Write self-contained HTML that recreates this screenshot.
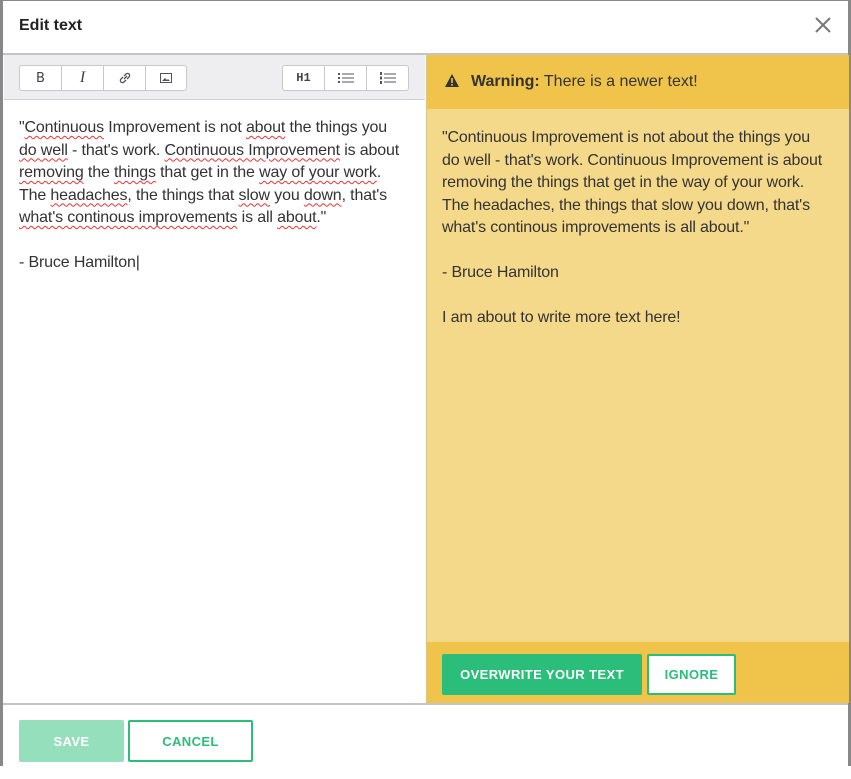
<!DOCTYPE html>
<html><head><style>
body{margin:0;width:851px;height:779px;background:#888;position:relative;overflow:hidden;font-family:"Liberation Sans",sans-serif;}
.bgtxt{position:absolute;left:0;top:766px;width:851px;height:13px;background:#fff;}
.modal{position:absolute;left:3px;top:1px;width:845px;height:767px;background:#fff;}
.hdr{position:absolute;left:0;top:0;width:845px;height:52px;border-bottom:2px solid #c4c4c4;}
.hdr h1{position:absolute;left:16px;top:16px;margin:0;font-size:16px;font-weight:bold;color:#222;}
.close{position:absolute;left:812px;top:16px;}
.left{position:absolute;left:1px;top:54px;width:421px;height:648px;}
.tb{height:44px;background:#eeeef0;border-bottom:1px solid #d0d0d0;position:relative;}
.grp{position:absolute;top:10px;height:24px;border:1px solid #c8c8c8;border-radius:3px;background:#fff;display:flex;}
.grp div{border-right:1px solid #c8c8c8;display:flex;align-items:center;justify-content:center;font-size:13px;color:#444;}
.grp div:last-child{border-right:none;}
.txt{position:absolute;left:15px;top:62px;white-space:nowrap;font-size:16px;letter-spacing:-0.15px;line-height:22.5px;color:#333;}
.sp{text-decoration:underline wavy #e33;text-decoration-thickness:1px;text-underline-offset:3px;}
.right{position:absolute;left:423px;top:54px;width:422px;height:648px;background:#f5d98a;border-left:1px solid #d9c48a;}
.warn{height:54px;background:#f0c44a;position:relative;font-size:16px;color:#333;}
.rt{position:absolute;left:15px;top:72px;white-space:nowrap;font-size:16px;letter-spacing:-0.15px;line-height:22.5px;color:#333;}
.rf{position:absolute;left:0;top:587px;width:422px;height:61px;background:#f0c44a;}
.btn{position:absolute;box-sizing:border-box;font-weight:bold;font-size:13px;letter-spacing:.4px;display:flex;align-items:center;justify-content:center;border-radius:2px;}
.bot{position:absolute;left:0;top:702px;width:845px;height:2px;background:#c4c4c4;}
</style></head><body>
<div class="bgtxt"></div>
<div class="modal">
<div class="hdr"><h1>Edit text</h1>
<svg class="close" width="16" height="16" viewBox="0 0 16 16"><path d="M1 1L15 15M15 1L1 15" stroke="#777" stroke-width="2"/></svg></div>
<div class="left">
<div class="tb">
<div class="grp" style="left:15px;width:166px;">
<div style="width:41px;font-family:'DejaVu Sans';">B</div>
<div style="width:41px;font-style:italic;font-family:'Liberation Serif';font-size:16px;">I</div>
<div style="width:41px;"><svg width="14" height="14" viewBox="0 0 14 14"><path d="M6 8L9 5M5 6L3 8a2 2 0 0 0 3 3l2-2M9 8l2-2a2 2 0 0 0-3-3L6 5" stroke="#555" fill="none" stroke-width="1.3"/></svg></div>
<div style="width:40px;"><svg width="12" height="10" viewBox="0 0 12 10"><rect x=".5" y=".5" width="11" height="9" fill="none" stroke="#555"/><path d="M2 8l3-3 2 2 1-1 2 2z" fill="#555"/></svg></div>
</div>
<div class="grp" style="left:278px;width:125px;">
<div style="width:41px;font-family:'Liberation Mono';font-weight:bold;font-size:12px;">H1</div>
<div style="width:41px;"><svg width="16" height="12"><g fill="#555"><rect x="0" y="1" width="2" height="2"/><rect x="0" y="5" width="2" height="2"/><rect x="0" y="9" width="2" height="2"/><rect x="4" y="1.5" width="12" height="1"/><rect x="4" y="5.5" width="12" height="1"/><rect x="4" y="9.5" width="12" height="1"/></g></svg></div>
<div style="width:41px;"><svg width="16" height="12"><g fill="#555"><rect x="0" y="0" width="2" height="3"/><rect x="0" y="4.5" width="2" height="3"/><rect x="0" y="9" width="2" height="3"/><rect x="4" y="1.5" width="12" height="1"/><rect x="4" y="5.5" width="12" height="1"/><rect x="4" y="9.5" width="12" height="1"/></g></svg></div>
</div>
</div>
<div class="txt">"<span class="sp">Continuous</span> Improvement is not <span class="sp">about</span> the things you<br><span class="sp">do well</span> - that's work. <span class="sp">Continuous Improvement</span> is about<br><span class="sp">removing</span> the <span class="sp">things</span> that get in the <span class="sp">way of your work</span>.<br>The <span class="sp">headaches</span>, the things that <span class="sp">slow</span> you <span class="sp">down</span>, that's<br><span class="sp">what's continous improvements</span> is all <span class="sp">about</span>."<br><br>- Bruce Hamilton|</div>
</div>
<div class="right">
<div class="warn"><svg style="position:absolute;left:18px;top:19px" width="14" height="13" viewBox="0 0 14 13"><path d="M7 0L14 13H0z" fill="#333"/><rect x="6.2" y="4" width="1.6" height="5" fill="#f0c44a"/><rect x="6.2" y="10" width="1.6" height="1.6" fill="#f0c44a"/></svg><span style="position:absolute;left:44px;top:18px;"><b>Warning:</b> There is a newer text!</span></div>
<div class="rt">"Continuous Improvement is not about the things you<br>do well - that's work. Continuous Improvement is about<br>removing the things that get in the way of your work.<br>The headaches, the things that slow you down, that's<br>what's continous improvements is all about."<br><br>- Bruce Hamilton<br><br>I am about to write more text here!</div>
<div class="rf">
<div class="btn" style="left:15px;top:12px;width:200px;height:41px;background:#2bbd7a;color:#fff;">OVERWRITE YOUR TEXT</div>
<div class="btn" style="left:220px;top:12px;width:89px;height:41px;background:#fff;border:2px solid #2bbd7a;color:#2bbd7a;">IGNORE</div>
</div>
</div>
<div class="bot"></div>
<div class="btn" style="left:16px;top:719px;width:105px;height:42px;background:#95dfbc;color:#fff;">SAVE</div>
<div class="btn" style="left:125px;top:719px;width:125px;height:42px;background:#fff;border:2px solid #2bbd7a;color:#2bbd7a;">CANCEL</div>
</div>
</body></html>
